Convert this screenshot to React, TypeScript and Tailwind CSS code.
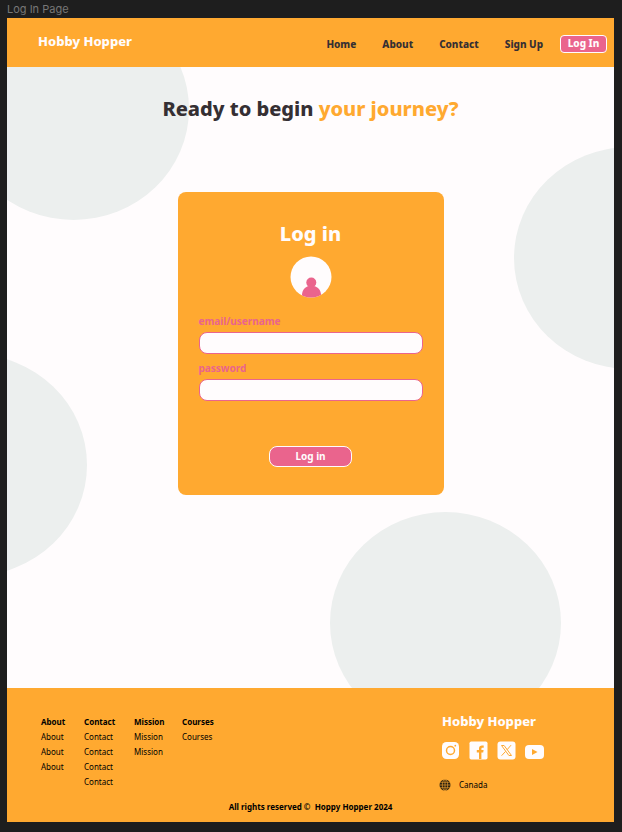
import React from "react";

const footerColumns = [
  { title: "About", links: ["About", "About", "About"] },
  { title: "Contact", links: ["Contact", "Contact", "Contact", "Contact"] },
  { title: "Mission", links: ["Mission", "Mission"] },
  { title: "Courses", links: ["Courses"] },
];

function Blob({ place }: { place: string }) {
  return <div className={`absolute h-[222px] w-[231px] rounded-[50%] bg-[#ecefee] ${place}`} />;
}

function Header() {
  return (
    <header className="relative flex h-[49px] items-center justify-between bg-[#ffa930] pl-[31px] pr-[7px]">
      <a href="#" className="pb-[3px] text-[13px] leading-4 font-extrabold text-[#fffcfd]">
        Hobby Hopper
      </a>
      <nav className="flex items-center gap-[17px] pt-[2px] text-[10px] leading-4 font-extrabold text-[#352f33]">
        <div className="flex gap-[26px]">
          <a href="#home">Home</a>
          <a href="#about">About</a>
          <a href="#contact">Contact</a>
          <a href="#signup">Sign Up</a>
        </div>
        <button
          type="button"
          className="flex h-[18px] w-[47px] items-center justify-center rounded-[4px] border border-[#fffcfd] bg-[#ea648d] pb-[2px] text-[#fffcfd]"
        >
          Log In
        </button>
      </nav>
    </header>
  );
}

function Avatar() {
  return (
    <svg viewBox="0 0 42 42" className="mt-[8px] size-[42px]" aria-hidden="true">
      <defs>
        <clipPath id="avatar-disc">
          <circle cx="21" cy="21" r="20.5" />
        </clipPath>
      </defs>
      <circle cx="21" cy="21" r="20.5" fill="#fffcfd" />
      <g fill="#ea648d" clipPath="url(#avatar-disc)">
        <circle cx="21.3" cy="26.500" r="5" />
        <path d="M12 42v-3c0-5 3.500-8.500 7-9h4.500c4 .5 7.500 4 7.500 9v3z" />
      </g>
    </svg>
  );
}

function Field({ id, label, type }: { id: string; label: string; type: string }) {
  return (
    <div className="flex flex-col">
      <label htmlFor={id} className="text-[10px] leading-4 font-bold text-[#ea648d]">
        {label}
      </label>
      <input
        id={id}
        type={type}
        className="mt-[3px] h-[22px] w-full rounded-[8px] border border-[#ea648d] bg-[#fffcfd] px-2 text-[10px] outline-none"
      />
    </div>
  );
}

function LoginCard() {
  return (
    <form
      onSubmit={(e) => e.preventDefault()}
      className="flex w-[266px] flex-col items-center rounded-[8px] bg-[#ffa930] px-[21px] pt-[28px] pb-[28px]"
    >
      <h2 className="text-[20px] leading-7 font-extrabold text-[#fffcfd]">Log in</h2>
      <Avatar />
      <div className="mt-[15px] flex w-full flex-col gap-[6px]">
        <Field id="username" label="email/username" type="text" />
        <Field id="password" label="password" type="password" />
      </div>
      <button
        type="submit"
        className="mt-[45px] flex h-[21px] w-[83px] items-center justify-center rounded-[8px] border border-[#fffcfd] bg-[#ea648d] pb-[2px] text-[10px] leading-4 font-bold text-[#fffcfd]"
      >
        Log in
      </button>
    </form>
  );
}

function SocialIcons() {
  return (
    <div className="mt-[12px] flex items-center gap-[9px] pl-[2px] text-[#fffcfd]">
      <a href="#instagram" aria-label="Instagram">
        <svg viewBox="0 0 19 19" className="size-[19px]">
          <rect x="1" y="1" width="17" height="17" rx="4.500" fill="currentColor" />
          <circle cx="9.500" cy="9.500" r="4" fill="none" stroke="#ffa930" strokeWidth="1.500" />
          <circle cx="14.300" cy="4.700" r=".9" fill="#ffa930" />
        </svg>
      </a>
      <a href="#facebook" aria-label="Facebook">
        <svg viewBox="0 0 19 19" className="size-[19px]">
          <rect x=".5" y=".5" width="18" height="18" rx="1.800" fill="currentColor" />
          <path
            d="M10 18v-6.500H7.800V9H10V7.400C10 5.300 11.300 4.500 13 4.500h1.700v2.200h-1.200c-.8 0-1.100.4-1.100 1.100V9h2.200l-.4 2.500h-1.800V18z"
            fill="#ffa930"
          />
        </svg>
      </a>
      <a href="#x" aria-label="X">
        <svg viewBox="0 0 19 19" className="size-[19px]">
          <rect x=".5" y=".5" width="18" height="18" rx="3" fill="currentColor" />
          <g fill="none" stroke="#ffa930" strokeWidth="1">
            <path d="M4.500 4.500h2.600l7.400 10h-2.600z" />
            <path d="M14 4.200l-4 4.600M8.600 10.400l-4 4.300" />
          </g>
        </svg>
      </a>
      <a href="#youtube" aria-label="YouTube">
        <svg viewBox="0 0 19 19" className="size-[19px]">
          <rect x="0" y="4" width="19" height="14" rx="4" fill="currentColor" />
          <path d="M7 8v6l5.500-3z" fill="#ffa930" />
        </svg>
      </a>
    </div>
  );
}

function Globe() {
  return (
    <svg viewBox="0 0 12 12" className="size-[12px]" aria-hidden="true">
      <circle cx="6" cy="6" r="5.500" fill="#2b2110" />
      <g fill="none" stroke="#ffa930" strokeWidth=".6">
        <ellipse cx="6" cy="6" rx="2.700" ry="5.500" />
        <path d="M6 .5v11M.5 6h11M1.200 3.300h9.600M1.200 8.700h9.600" />
      </g>
    </svg>
  );
}

function Footer() {
  return (
    <footer className="relative bg-[#ffa930] pt-[25px] pb-[8px] text-[8px] leading-[15px] text-black">
      <div className="flex justify-between pr-[70px] pl-[34px]">
        <div className="grid grid-cols-[43px_50px_48px_auto] pt-[1px]">
          {footerColumns.map((col) => (
            <div key={col.title}>
              <h3 className="font-bold">{col.title}</h3>
              <ul>
                {col.links.map((link, i) => (
                  <li key={i}>
                    <a href="#">{link}</a>
                  </li>
                ))}
              </ul>
            </div>
          ))}
        </div>
        <div>
          <p className="pl-[3px] text-[13px] leading-4 font-extrabold text-[#fffcfd]">Hobby Hopper</p>
          <SocialIcons />
          <div className="mt-[17px] flex items-center gap-[8px]">
            <Globe />
            <span>Canada</span>
          </div>
        </div>
      </div>
      <p className="mt-[7px] text-center font-bold">All rights reserved ©&nbsp; Hoppy Hopper 2024</p>
    </footer>
  );
}

export default function App() {
  return (
    <div className="min-h-screen bg-[#1e1e1e] pr-[8px] pb-[10px] pl-[7px]">
      <p className="font-['Inter',sans-serif] text-[11px] leading-[18px] text-[#777777]">Log In Page</p>
      <div className="relative overflow-hidden bg-[#fffcfd] font-['Noto_Sans',sans-serif]">
        <Blob place="-left-[49px] -top-[20px]" />
        <Blob place="-right-[131px] top-[129px]" />
        <Blob place="-left-[151px] top-[336px]" />
        <Blob place="right-[53px] top-[494px]" />
        <Header />
        <main className="relative flex flex-col items-center pt-[28px] pb-[193px]">
          <h1 className="text-[20px] leading-7 font-extrabold text-[#352f33]">
            Ready to begin <span className="text-[#ffa930]">your journey?</span>
          </h1>
          <div className="mt-[69px]">
            <LoginCard />
          </div>
        </main>
        <Footer />
      </div>
    </div>
  );
}
